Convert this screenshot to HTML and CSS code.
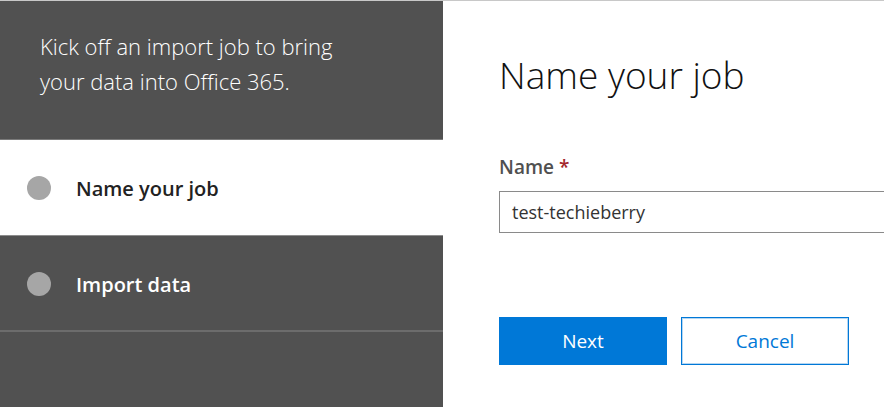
FILE: index.html
```html
<!DOCTYPE html>
<html>
<head>
<meta charset="utf-8">
<link rel="stylesheet" href="styles.css">
</head>
<body>
<div class="page">
  <aside class="side">
    <div class="intro"><p class="intro-text">Kick off an import job to bring your data into Office 365.</p></div>
    <div class="step active"><span class="dot"></span><span class="step-label">Name your job</span></div>
    <div class="step"><span class="dot"></span><span class="step-label">Import data</span></div>
    <div class="side-rest"></div>
  </aside>
  <main class="main">
    <h1 class="title">Name your job</h1>
    <label class="label">Name <span class="req">*</span></label>
    <div class="input">test-techieberry</div>
    <div class="actions">
      <button class="btn primary">Next</button>
      <button class="btn secondary">Cancel</button>
    </div>
  </main>
</div>
</body>
</html>
```
FILE: styles.css
```css
* { box-sizing: border-box; }
html, body { margin: 0; padding: 0; }
body {
  width: 884px;
  height: 407px;
  overflow: hidden;
  font-family: "Open Sans", "Noto Sans", sans-serif;
  background: #fff;
}
.page {
  display: flex;
  height: 407px;
  border-top: 1px solid #c8c8c8;
}
.side {
  width: 443px;
  flex: none;
  background: #515151;
  display: flex;
  flex-direction: column;
}
.intro {
  height: 139px;
  padding: 28px 0 0 40px;
  color: #fff;
  border-bottom: 1px solid #7a7a7a;
}
.intro-text {
  margin: 0;
  max-width: 330px;
  font-size: 22px;
  font-weight: 300;
  line-height: 35px;
}
.step {
  display: flex;
  align-items: center;
  height: 96px;
  padding-left: 27px;
  padding-top: 1px;
  color: #fff;
  border-bottom: 1px solid #8c8c8c;
}
.step + .step { border-bottom: 2px solid #6c6c6c; height: 96px; padding-top: 2px; }
.step.active { background: #fff; color: #222; }
.dot {
  width: 24px;
  height: 24px;
  border-radius: 50%;
  background: #a6a6a6;
  flex: none;
}
.step-label {
  margin-left: 25px;
  font-size: 20px;
  font-weight: 600;
}
.side-rest { flex: 1; }
.main {
  flex: 1;
  padding-left: 56px;
  display: flex;
  flex-direction: column;
}
.title {
  margin: 49px 0 0 0;
  font-size: 37px;
  font-weight: 300;
  line-height: 50px;
  color: #111;
}
.label {
  margin-top: 54px;
  font-size: 19px;
  font-weight: 600;
  color: #505050;
  line-height: 26px;
}
.req { color: #a4262c; }
.input {
  margin-top: 11px;
  height: 42px;
  border: 1px solid #8a8a8a;
  border-right: none;
  padding-left: 12px;
  font-size: 18px;
  line-height: 40px;
  color: #333;
}
.actions {
  margin-top: 84px;
  display: flex;
  gap: 14px;
}
.btn {
  width: 168px;
  height: 48px;
  font-family: inherit;
  font-size: 19px;
  font-weight: 400;
  padding: 0;
  cursor: pointer;
}
.primary {
  background: #0078d7;
  color: #fff;
  border: none;
}
.secondary {
  background: #fff;
  color: #0078d7;
  border: 1px solid #0078d7;
  box-shadow: inset 0 0 0 1px #b5d6f2;
}
```
